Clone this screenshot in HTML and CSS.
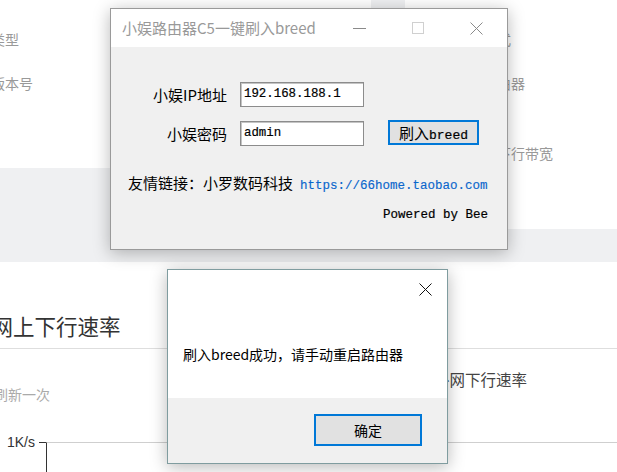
FILE: index.html
```html
<!DOCTYPE html>
<html lang="zh-CN">
<head>
<meta charset="utf-8">
<title>小娱路由器C5一键刷入breed</title>
<link rel="stylesheet" href="styles.css">
</head>
<body>
<div class="page">
  <div class="top-row">
    <section class="card card-left">
      <div class="info-row"><span class="lbl lbl-top-left">名称</span></div>
      <div class="info-row"><span class="lbl lbl-cut">类型</span></div>
      <div class="info-row"><span class="lbl lbl-cut">版本号</span></div>
    </section>
    <section class="card card-right">
      <div class="info-row"><span class="lbl lbl-top-right">型号</span></div>
      <div class="info-row"><span class="lbl">无线工作模式</span></div>
      <div class="info-row"><span class="lbl">当前连接路由器</span></div>
      <div class="info-row"></div>
      <div class="info-row info-row-last"><span class="lbl">当前网口上下行带宽</span></div>
    </section>
  </div>

  <section class="card card-chart">
    <div class="chart-head">
      <h2 class="chart-title">外网上下行速率</h2>
    </div>
    <div class="chart-meta">
      <span class="chart-sub">刷新一次</span>
      <div class="legend">
        <span class="legend-item">外网下行速率</span>
      </div>
    </div>
    <div class="chart-plot">
      <div class="y-axis">
        <span class="y-label">1K/s</span><span class="y-tick"></span>
      </div>
      <div class="plot-area"></div>
    </div>
  </section>

  <div class="dialog main-dialog">
    <div class="titlebar">
      <span class="title">小娱路由器C5一键刷入breed</span>
      <span class="cap-btn">
        <svg width="13" height="13" viewBox="0 0 13 13"><line x1="0" y1="6.5" x2="13" y2="6.5" stroke="#8a8a8a" stroke-width="1"/></svg>
      </span>
      <span class="cap-btn">
        <svg width="12" height="12" viewBox="0 0 12 12"><rect x="0.5" y="0.5" width="11" height="11" fill="none" stroke="#d0d0d0" stroke-width="1"/></svg>
      </span>
      <span class="cap-btn">
        <svg width="13" height="13" viewBox="0 0 13 13"><path d="M0.5 0.5 L12.5 12.5 M12.5 0.5 L0.5 12.5" stroke="#8a8a8a" stroke-width="1" fill="none"/></svg>
      </span>
    </div>
    <div class="main-body">
      <div class="form">
        <label class="form-label">小娱IP地址</label>
        <div class="textbox">192.168.188.1</div>
        <span></span>
        <label class="form-label">小娱密码</label>
        <div class="textbox">admin</div>
        <div class="win-btn">刷入<span class="mono">breed</span></div>
      </div>
      <div class="link-row">友情链接：小罗数码科技<span class="link">https://66home.taobao.com</span></div>
      <div class="powered">Powered by Bee</div>
    </div>
  </div>

  <div class="dialog msg-dialog">
    <div class="msg-cap">
      <span class="msg-close">
        <svg width="13" height="13" viewBox="0 0 13 13"><path d="M0.5 0.5 L12.5 12.5 M12.5 0.5 L0.5 12.5" stroke="#111" stroke-width="1" fill="none"/></svg>
      </span>
    </div>
    <div class="msg-text">刷入breed成功，请手动重启路由器</div>
    <div class="msg-foot">
      <div class="ok-btn">确定</div>
    </div>
  </div>
</div>
</body>
</html>
```

FILE: styles.css
```css
* {
  box-sizing: border-box;
  margin: 0;
  padding: 0;
}

html, body {
  width: 617px;
  height: 472px;
  overflow: hidden;
}

body {
  background: #eff0f2;
  font-family: "Noto Sans CJK SC", "Noto Sans", sans-serif;
}

.page {
  position: relative;
  width: 617px;
  height: 472px;
  overflow: hidden;
}

/* ---------- background page ---------- */
.top-row {
  display: grid;
  grid-template-columns: 371px 212px;
  column-gap: 34px;
  align-items: start;
}

.card {
  background: #fff;
  overflow: hidden;
}

.card-left {
  height: 168px;
}

.card-right {
  height: 229px;
  padding-left: 22px;
}

.info-row {
  height: 44px;
  display: flex;
  align-items: center;
  font-size: 14px;
  line-height: 20px;
  color: #999;
  white-space: nowrap;
}

.info-row:first-child {
  margin-top: -27px;
}

.info-row-last {
  margin-top: -18px;
}

.lbl-cut {
  margin-left: -9px;
}

.lbl-top-left {
  margin-left: 5px;
  margin-bottom: 8px;
  color: #777;
}

.lbl-top-right {
  margin-left: 23px;
  margin-bottom: 8px;
  color: #777;
}

.card-chart {
  margin-top: 33px;
  height: 210px;
}

.chart-head {
  padding-top: 49px;
  padding-bottom: 7px;
  border-bottom: 1px solid #dedede;
}

.chart-title {
  font-size: 21.5px;
  line-height: 30px;
  font-weight: normal;
  color: #333;
  margin-left: -30px;
  white-space: nowrap;
}

.chart-meta {
  display: flex;
  align-items: flex-start;
  white-space: nowrap;
}

.chart-sub {
  margin-top: 35px;
  margin-left: -6px;
  font-size: 14px;
  line-height: 20px;
  color: #aaa;
}

.legend {
  margin-left: auto;
  margin-top: 20px;
  padding-right: 90px;
  display: flex;
  font-size: 15.5px;
  line-height: 20px;
  color: #444;
}

.chart-plot {
  margin-top: 38px;
  display: flex;
  height: 40px;
}

.y-axis {
  width: 46px;
  display: flex;
  align-items: flex-start;
  justify-content: flex-end;
}

.y-label {
  margin-top: -9px;
  font-family: "Liberation Sans", Arial, sans-serif;
  font-size: 14px;
  line-height: 18px;
  color: #333;
}

.y-tick {
  width: 7px;
  height: 1px;
  background: #333;
  margin-left: 4px;
}

.plot-area {
  flex: 1;
  border-top: 1px solid #cfcfcf;
  border-left: 1px solid #333;
}

/* ---------- dialogs ---------- */
.dialog {
  position: absolute;
  display: flex;
  flex-direction: column;
  border: 1px solid #9a9a9a;
  box-shadow: 0 3px 16px rgba(0, 0, 0, 0.28);
}

.main-dialog {
  left: 110px;
  top: 8px;
  width: 398px;
  height: 242px;
}

.titlebar {
  height: 38px;
  background: #fff;
  display: flex;
  align-items: center;
  padding-right: 1.5px;
}

.title {
  flex: 1;
  padding-left: 11px;
  font-size: 15px;
  line-height: 20px;
  color: #999;
  white-space: nowrap;
}

.cap-btn {
  width: 58.5px;
  height: 38px;
  display: flex;
  align-items: center;
  justify-content: center;
}

.main-body {
  flex: 1;
  background: #f0f0f0;
  padding: 35px 19px 0 17px;
}

.form {
  display: grid;
  grid-template-columns: 99px 124px 102px;
  grid-auto-rows: 25px;
  column-gap: 13px;
  row-gap: 14px;
  align-items: center;
}

.form-label {
  font-size: 15px;
  line-height: 25px;
  text-align: right;
  color: #000;
  white-space: nowrap;
}

.textbox {
  height: 25px;
  background: #fff;
  border: 1px solid #8c8c8c;
  box-shadow: inset 1px 1px 0 #c4c4c4;
  padding-left: 3px;
  font-family: "Liberation Mono", "Courier New", monospace;
  font-size: 12.4px;
  line-height: 23px;
  color: #000;
  white-space: nowrap;
  -webkit-text-stroke: 0.2px #000;
}

.win-btn {
  margin-left: 11px;
  margin-top: -2px;
  height: 25px;
  border: 2px solid #0078d7;
  background: #e1e1e1;
  font-size: 15px;
  line-height: 21px;
  text-align: center;
  color: #000;
  white-space: nowrap;
}

.mono {
  font-family: "Liberation Mono", "Courier New", monospace;
  font-size: 13px;
  -webkit-text-stroke: 0.2px #000;
}

.link-row {
  margin-top: 27px;
  font-size: 15px;
  line-height: 20px;
  color: #000;
  white-space: nowrap;
}

.link {
  margin-left: 7px;
  font-family: "Liberation Mono", "Courier New", monospace;
  font-size: 12.5px;
  color: #0a66cc;
  -webkit-text-stroke: 0.15px #0a66cc;
}

.powered {
  margin-top: 9px;
  text-align: right;
  font-family: "Liberation Mono", "Courier New", monospace;
  font-size: 12.5px;
  line-height: 20px;
  color: #000;
  -webkit-text-stroke: 0.2px #000;
}

.msg-dialog {
  left: 167px;
  top: 269px;
  width: 281px;
  height: 195px;
  border-color: #7f9c9f;
  background: #fff;
}

.msg-cap {
  height: 38px;
  display: flex;
  justify-content: flex-end;
}

.msg-close {
  width: 44px;
  display: flex;
  align-items: center;
  justify-content: center;
}

.msg-text {
  flex: 1;
  padding: 36px 0 0 15px;
  font-size: 14px;
  line-height: 20px;
  color: #000;
  white-space: nowrap;
}

.msg-foot {
  height: 65px;
  background: #f0f0f0;
  display: flex;
  justify-content: flex-end;
  align-items: flex-start;
  padding: 16px 25px 0 0;
}

.ok-btn {
  width: 108px;
  height: 32px;
  border: 2px solid #0078d7;
  background: #e1e1e1;
  font-size: 14px;
  line-height: 28px;
  text-align: center;
  color: #000;
}
```
